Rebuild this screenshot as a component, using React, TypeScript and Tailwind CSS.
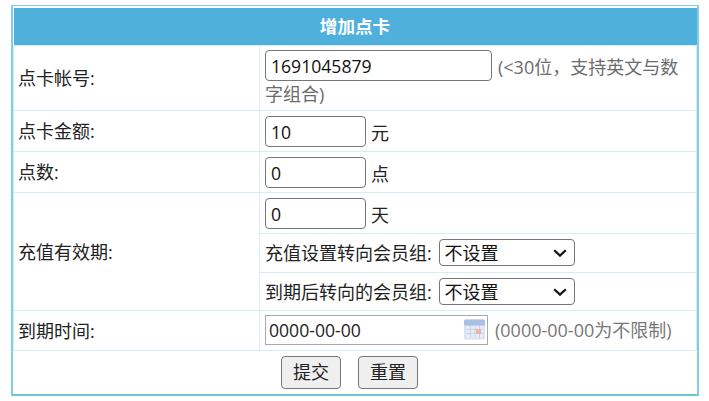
import React from "react";

function TextInput({ value, w }: { value: string; w: string }) {
  return (
    <input
      readOnly
      value={value}
      className={`${w} h-[31px] rounded-[4px] border border-[#767676] bg-white px-[5px] text-[17.6px] text-[#111] outline-none align-middle`}
    />
  );
}

function Unit({ children }: { children: React.ReactNode }) {
  return <span className="ml-[5px] inline-block pt-[3px] align-middle">{children}</span>;
}

function Sel() {
  return (
    <span className="relative ml-[3px] inline-block h-[27px] w-[136px] rounded-[4px] border border-[#767676] bg-white align-middle">
      <span className="absolute left-[4px] top-[1px] text-[18px] leading-[24px] text-[#111]">不设置</span>
      <svg className="absolute right-[7px] top-[9px]" width="14" height="8" viewBox="0 0 14 8" fill="none">
        <path d="M1.2 1.2 7 6.6l5.8-5.4" stroke="#111" strokeWidth="2.2" />
      </svg>
    </span>
  );
}

function Calendar() {
  return (
    <svg className="absolute right-[2px] top-[3px]" width="21" height="21" viewBox="0 0 21 21">
      <rect x="0" y="0.5" width="21" height="20" rx="1.5" fill="#d9e3f1" />
      <rect x="0" y="0.5" width="21" height="6" rx="1.5" fill="#a9c0e2" />
      <rect x="2" y="7" width="17" height="12" fill="#e6ecf5" />
      <path d="M2 10.5h17M2 14.5h17M6.5 7v12M11 7v12M15.5 7v12" stroke="#c9d5e6" strokeWidth="1" />
      <rect x="12" y="10" width="5" height="5" fill="#eeb3a4" />
    </svg>
  );
}

const border = "border border-[#d7edf5]";
const left = `${border} pl-[4px] pt-[2px] text-left`;
const right = `${border} pl-[5px] pr-[4px] text-left`;
const inputCell = `${border} pl-[5px] pr-[4px] pt-[2px] text-left`;

export default function App() {
  return (
    <div
      className="h-[401px] w-[709px] bg-white pl-[11px] pt-[5px] text-[18px] text-[#222]"
      style={{ fontFamily: '"Open Sans","Noto Sans CJK SC",sans-serif' }}
    >
      <div className="h-[391px] w-[688px] border-2 border-t-[1px] border-[#7fcfe6] border-b-[#6fc4d6]">
        <table className="w-full table-fixed border-collapse">
          <colgroup>
            <col className="w-[246px]" />
            <col />
          </colgroup>
          <tbody>
            <tr className="h-[38px]">
              <th colSpan={2} className="border-t-[2px] border-white bg-[#4fb0dc] text-center text-[17.6px] font-bold text-white">
                增加点卡
              </th>
            </tr>
            <tr className="h-[65px]">
              <td className={left}>点卡帐号:</td>
              <td className={`${inputCell} leading-[26px] text-[#6b6b6b]`}>
                <div className="w-[420px]">
                  <TextInput value="1691045879" w="w-[227px]" />
                  <span className="ml-[6px] inline-block pt-[3px] align-middle">(&lt;30位，支持英文与数</span>
                  <span>字组合)</span>
                </div>
              </td>
            </tr>
            <tr className="h-[41px]">
              <td className={left}>点卡金额:</td>
              <td className={inputCell}>
                <TextInput value="10" w="w-[101px]" />
                <Unit>元</Unit>
              </td>
            </tr>
            <tr className="h-[41px]">
              <td className={left}>点数:</td>
              <td className={inputCell}>
                <TextInput value="0" w="w-[101px]" />
                <Unit>点</Unit>
              </td>
            </tr>
            <tr className="h-[41px]">
              <td rowSpan={3} className={left}>充值有效期:</td>
              <td className={inputCell}>
                <TextInput value="0" w="w-[101px]" />
                <Unit>天</Unit>
              </td>
            </tr>
            <tr className="h-[39px]">
              <td className={right}>
                <span className="inline-block pt-[2px] align-middle">充值设置转向会员组:</span> <Sel />
              </td>
            </tr>
            <tr className="h-[38px]">
              <td className={right}>
                <span className="inline-block pt-[2px] align-middle">到期后转向的会员组:</span> <Sel />
              </td>
            </tr>
            <tr className="h-[40px]">
              <td className={left}>到期时间:</td>
              <td className={right}>
                <span className="relative inline-block h-[30px] w-[223px] border border-[#a9a9a9] align-middle">
                  <span className="absolute left-[3px] top-[1px] text-[17.6px] leading-[26px] text-[#222]">0000-00-00</span>
                  <Calendar />
                </span>
                <span className="ml-[7px] align-middle text-[#777]">(0000-00-00为不限制)</span>
              </td>
            </tr>
            <tr className="h-[43px]">
              <td colSpan={2} className="pr-[11px] pt-[1px] text-center">
                <button className="h-[33px] w-[60px] rounded-[4px] border border-[#767676] bg-[#efefef] text-[18px] text-[#222]">提交</button>
                <button className="ml-[17px] h-[33px] w-[60px] rounded-[4px] border border-[#767676] bg-[#efefef] text-[18px] text-[#222]">重置</button>
              </td>
            </tr>
          </tbody>
        </table>
      </div>
    </div>
  );
}
